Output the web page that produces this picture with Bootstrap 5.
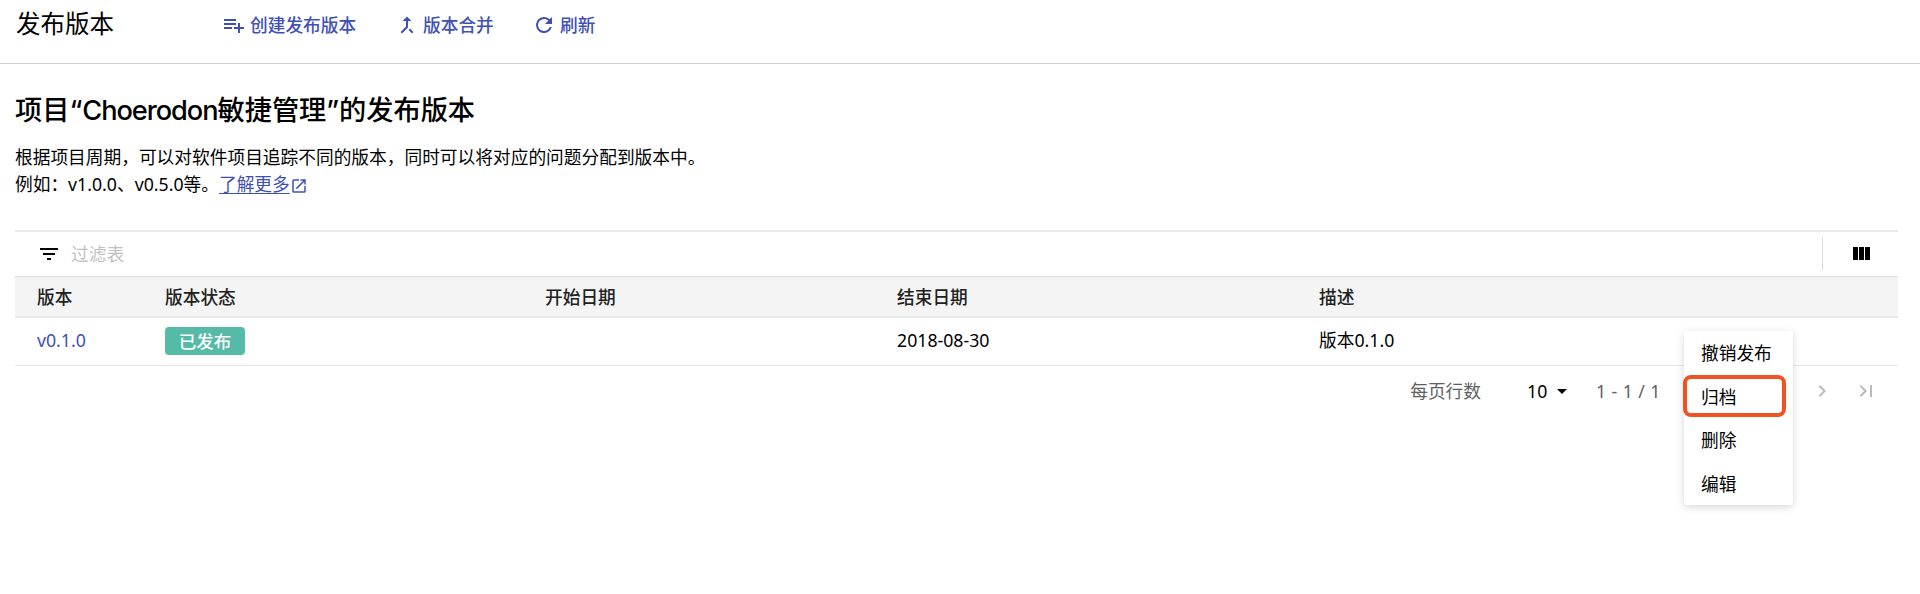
<!DOCTYPE html>
<html lang="zh-CN">
<head>
<meta charset="utf-8">
<meta name="viewport" content="width=device-width, initial-scale=1">
<title>发布版本</title>
<link href="https://cdn.jsdelivr.net/npm/bootstrap@5.3.0/dist/css/bootstrap.min.css" rel="stylesheet">
<style>
body{font-family:"Noto Sans","Noto Sans CJK SC",sans-serif;font-size:17.72px;line-height:26px;color:#000;background:#fff;overflow:hidden}
svg{width:24px;height:24px;fill:currentColor;flex:none;display:block}
.page-head{height:64px;padding:0 0 14px 16px;border-bottom:1px solid #cfcfcf}
.page-title{font-size:24.5px;width:206px;line-height:36px;margin:0;padding-bottom:2px;font-weight:400}
.tool-btn{color:#3f51b5;font-weight:500;font-size:17.7px;line-height:26px;padding:0;border:0;gap:4px}
.tool-btn:hover{color:#303f9f}
.intro{padding:29px 15px 0}
.intro h2{font-family:Inter,"Noto Sans CJK SC",sans-serif;font-size:27.2px;font-weight:500;line-height:36px;margin:0 0 15px}
.intro h2 span{letter-spacing:-1.05px}
.intro p{line-height:27.4px;margin:0}
.more{color:#3f51b5;text-underline-offset:2px}
.more svg{width:18px;height:18px;display:inline-block;vertical-align:-4px}
.grid-wrap{margin:31px 22px 0 15px}
.filter-bar{height:46px;border-top:2px solid #e8e8e8;padding:0 25px 0 22px}
.filter-bar .hint{color:#bfbfbf;margin-left:10px}
.split{width:1px;height:33px;background:#ddd;margin-right:26px}
.ver{table-layout:fixed;--bs-table-bg:transparent}
.ver th,.ver td{padding:0 0 0 22px;border:0;vertical-align:middle}
.ver th{height:41px;background:#f4f4f4;border-top:1px solid #dedede;border-bottom:2px solid #e9e9e9;font-weight:500;color:#212121}
.ver td{height:48px;border-bottom:1px solid #e6e6e6;color:#000;padding-bottom:3px}
.ver th:not(:first-child),.ver td:not(:first-child){padding-left:0}
.tag{background:#55bba6;color:#fff;font-weight:500;font-size:17.5px;line-height:28px;width:80px;border-radius:4px;padding:0;display:block;position:relative;top:1px}
.pager{color:#616161;height:50px;padding-right:20px}
.pager .size{color:#000;margin-left:46px;width:69px;gap:3px}
.act-menu{position:absolute;left:1684px;top:331px;width:109px;min-width:0;height:174px;padding:0;border:0;border-radius:3px;box-shadow:0 2px 9px rgba(0,0,0,.16);font-size:17.7px}
.act-menu .dropdown-item{height:43.6px;padding:0 0 0 17px;line-height:44px;color:#000}
.picked::after{content:"";position:absolute;left:-1px;top:44px;width:103px;height:42px;border:4px solid #f05223;border-radius:8px}
</style>
</head>
<body>
<header class="page-head d-flex align-items-center">
  <h1 class="page-title">发布版本</h1>
  <button class="btn tool-btn d-flex align-items-center" style="width:173px"><svg viewBox="0 0 24 24"><path d="M14 10H2v2h12v-2zm0-4H2v2h12V6zm4 8v-4h-2v4h-4v2h4v4h2v-4h4v-2h-4zM2 16h8v-2H2v2z"/></svg>创建发布版本</button>
  <button class="btn tool-btn d-flex align-items-center" style="width:137px"><svg viewBox="0 0 24 24"><path d="M17 20.41L18.41 19 15 15.59 13.59 17 17 20.41zM7.5 8H11v5.59L5.59 19 7 20.41l6-6V8h3.5L12 3.5 7.5 8z"/></svg>版本合并</button>
  <button class="btn tool-btn d-flex align-items-center"><svg viewBox="0 0 24 24"><path d="M17.65 6.35A7.96 7.96 0 0 0 12 4a8 8 0 1 0 7.73 10h-2.08A6 6 0 1 1 12 6c1.66 0 3.14.69 4.22 1.78L13 11h7V4l-2.35 2.35z"/></svg>刷新</button>
</header>
<main>
  <section class="intro">
    <h2>项目“<span>Choerodon</span>敏捷管理”的发布版本</h2>
    <p>根据项目周期，可以对软件项目追踪不同的版本，同时可以将对应的问题分配到版本中。</p>
    <p>例如：v1.0.0、v0.5.0等。<a class="more" href="#">了解更多<svg viewBox="0 0 24 24"><path d="M19 19H5V5h7V3H5a2 2 0 0 0-2 2v14a2 2 0 0 0 2 2h14a2 2 0 0 0 2-2v-7h-2v7zM14 3v2h3.59l-9.83 9.83 1.41 1.41L19 6.41V10h2V3h-7z"/></svg></a></p>
  </section>
  <section class="grid-wrap">
    <div class="filter-bar d-flex align-items-center">
      <svg viewBox="0 0 24 24"><path d="M10 18h4v-2h-4v2zM3 6v2h18V6H3zm3 7h12v-2H6v2z"/></svg>
      <span class="hint">过滤表</span>
      <span class="split ms-auto"></span>
      <svg viewBox="0 0 24 24"><path d="M10 18h5V5h-5v13zm-6 0h5V5H4v13zM16 5v13h5V5h-5z"/></svg>
    </div>
    <table class="table ver mb-0">
      <colgroup><col style="width:150px"><col style="width:380px"><col style="width:352px"><col style="width:422px"><col></colgroup>
      <thead><tr><th>版本</th><th>版本状态</th><th>开始日期</th><th>结束日期</th><th>描述</th></tr></thead>
      <tbody><tr><td><a href="#" class="text-decoration-none" style="color:#3f51b5">v0.1.0</a></td><td><span class="badge tag">已发布</span></td><td></td><td>2018-08-30</td><td>版本0.1.0</td></tr></tbody>
    </table>
    <nav class="pager d-flex align-items-center justify-content-end">
      <span>每页行数</span>
      <span class="size d-flex align-items-center">10<svg viewBox="0 0 24 24"><path d="M7 10l5 5 5-5z"/></svg></span>
      <span style="width:214px;word-spacing:.8px">1 - 1 / 1</span>
      <svg viewBox="0 0 24 24" style="color:#bbb"><path d="M10 6L8.59 7.41 13.17 12l-4.58 4.59L10 18l6-6z"/></svg>
      <svg viewBox="0 0 24 24" style="color:#bbb;margin-left:20px"><path d="M5.59 7.41L10.18 12l-4.59 4.59L7 18l6-6-6-6zM16 6h2v12h-2z"/></svg>
    </nav>
  </section>
</main>
<div class="dropdown-menu show act-menu">
  <a class="dropdown-item" href="#">撤销发布</a>
  <a class="dropdown-item picked" href="#">归档</a>
  <a class="dropdown-item" href="#">删除</a>
  <a class="dropdown-item" href="#">编辑</a>
</div>
<script src="https://cdn.jsdelivr.net/npm/bootstrap@5.3.0/dist/js/bootstrap.bundle.min.js"></script>
</body>
</html>
